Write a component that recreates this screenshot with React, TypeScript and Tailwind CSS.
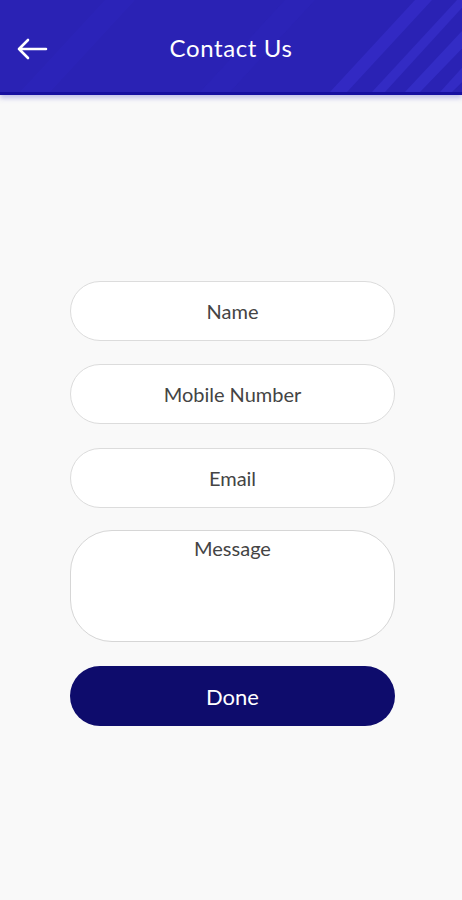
import { useState } from 'react';

export default function App() {
  const [name, setName] = useState('');
  const [mobile, setMobile] = useState('');
  const [email, setEmail] = useState('');
  const [message, setMessage] = useState('');

  const field =
    'h-[60px] w-full rounded-full border border-[#dcdcdc] bg-white text-center text-[20px] text-[#333] placeholder:text-[#444] focus:outline-none';

  return (
    <main className="min-h-[900px] bg-[#f9f9f9]" style={{ fontFamily: 'Lato, "Noto Sans", sans-serif' }}>
      {/* HEADER */}
      <header className="relative h-[95px] overflow-hidden border-b-[3px] border-[#1710a0] bg-[#2a22b4] shadow-[0_3px_5px_rgba(80,80,200,0.35)]">
        <svg className="absolute inset-0 h-full w-full" viewBox="0 0 462 95" preserveAspectRatio="none">
          <g fill="#3b34d4">
            <polygon points="330,95 415,0 432,0 347,95" opacity="0.45" />
            <polygon points="372,95 457,0 462,0 462,8 385,95" opacity="0.5" />
            <polygon points="405,95 462,32 462,50 420,95" opacity="0.55" />
            <polygon points="440,95 462,70 462,85 452,95" opacity="0.5" />
            <polygon points="20,95 105,0 135,0 50,95" opacity="0.12" />
            <polygon points="200,95 285,0 315,0 230,95" opacity="0.1" />
          </g>
        </svg>
        <div className="relative flex h-[92px] items-center px-4">
          <div className="w-[48px]">
            <button className="block translate-y-[3px] text-white">
              <svg width="32" height="24" viewBox="0 0 32 24" fill="none" stroke="white" strokeWidth="2.6" strokeLinecap="round" strokeLinejoin="round">
                <path d="M30 12H3M12 3L3 12l9 9" />
              </svg>
            </button>
          </div>
          <h1 className="mt-[3px] flex-1 text-center text-[24px] tracking-wide text-white">Contact Us</h1>
          <div className="w-[48px]" />
        </div>
      </header>

      {/* FORM */}
      <form className="ml-[70px] mt-[186px] flex w-[325px] flex-col" onSubmit={(e) => e.preventDefault()}>
        <input value={name} onChange={(e) => setName(e.target.value)} placeholder="Name" className={field} />
        <input value={mobile} onChange={(e) => setMobile(e.target.value)} placeholder="Mobile Number" className={`${field} mt-[23px]`} />
        <input value={email} onChange={(e) => setEmail(e.target.value)} placeholder="Email" className={`${field} mt-[24px]`} />
        <textarea
          value={message}
          onChange={(e) => setMessage(e.target.value)}
          placeholder="Message"
          className="mt-[22px] h-[112px] w-full resize-none rounded-[42px] border border-[#d6d6d6] bg-white pt-[2px] text-center text-[20px] text-[#333] placeholder:text-[#444] focus:outline-none"
        />
        <button type="submit" className="mt-[24px] h-[60px] w-full rounded-full bg-[#0e0c6c] text-[22px] text-white">
          Done
        </button>
      </form>
    </main>
  );
}
